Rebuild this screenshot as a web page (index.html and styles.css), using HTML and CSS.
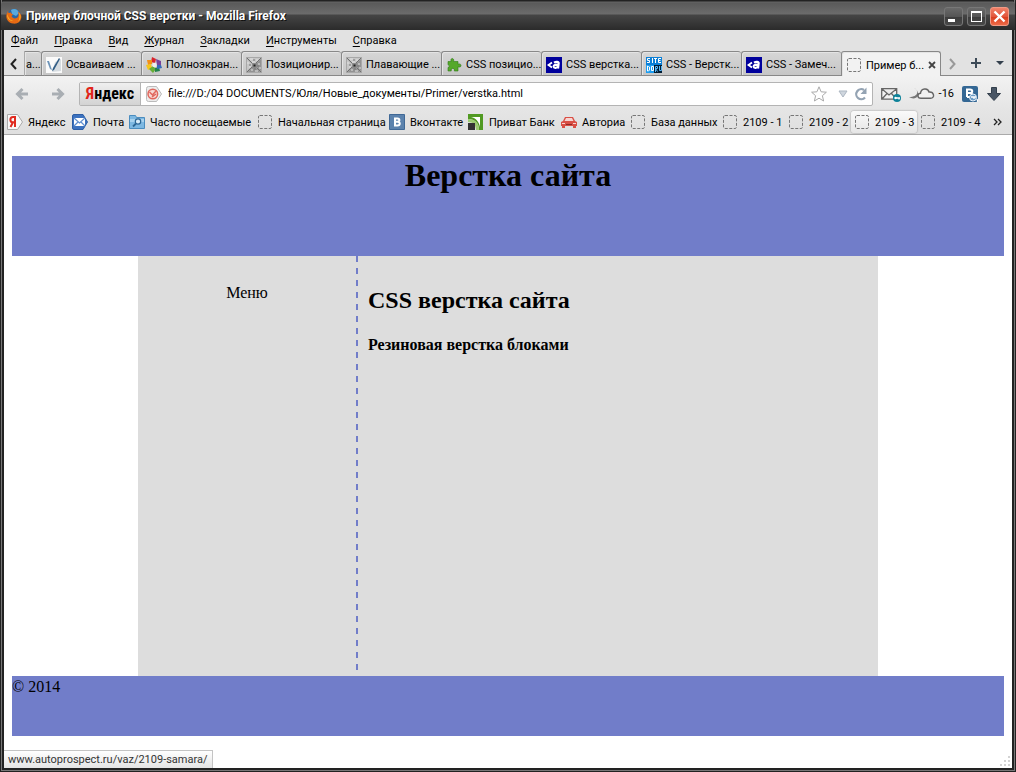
FILE: index.html
```html
<!DOCTYPE html>
<html lang="ru">
<head>
    <meta charset="UTF-8">
    <meta name="viewport" content="width=device-width, initial-scale=1.0">
    <title>Пример блочной CSS верстки</title>
    <link rel="stylesheet" href="styles.css">
</head>
<body>
    <!-- shared icons -->
    <svg class="sprite" aria-hidden="true">
        <symbol id="i-blank" viewBox="0 0 16 16">
            <rect x="1.5" y="1.5" width="13" height="13" rx="1.5" fill="none" stroke="#777" stroke-dasharray="3 1.5"/>
        </symbol>
        <symbol id="i-stone" viewBox="0 0 16 16">
            <path fill="#a8a8a8" d="M0 0h16v16H0z"/>
            <path fill="#c6c6c6" d="M1 1h14L8 8zM1 2v12l6-6z"/>
            <path fill="#929292" d="M15 2v12L9 8zM2 15h12L8 9z"/>
            <path stroke="#6f6f6f" d="M1 1l5 5M15 1l-5 5M1 15l5-5M15 15l-5-5"/>
            <path stroke="#e2e2e2" d="M4 2h3M10 3h2M1 6h2M3 10h2M12 7h2M13 11h2M5 13h2M9 14h3M6 5h3"/>
            <path stroke="#777" d="M7 3h2M3 8h2M11 9h2M8 12h2"/>
            <path fill="#8a8a8a" d="M6 6h5v5H6z"/>
            <path fill="#222" d="M7.500 7.500h2v2h-2z"/>
        </symbol>
        <symbol id="i-a" viewBox="0 0 16 16">
            <path fill="#00009c" d="M0 0h16v16H0z"/>
            <path fill="none" stroke="#fff" stroke-width="1.8" d="M6 5.5L2.500 8L6 10.500"/>
            <path fill="none" stroke="#fff" stroke-width="2.200" d="M8 5.600c2-1.200 5-1 4.700.6L12 11.500M12.300 7.700c-3-.2-4.700.6-4.600 2 .2 1.700 3.300 1.500 4.400-.4"/>
        </symbol>
    </svg>

    <div class="window">
        <header class="titlebar">
            <svg class="icon" viewBox="0 0 16 16" aria-hidden="true">
                <circle cx="8" cy="8" r="7" fill="#2767a8"/>
                <path fill="#59a9dd" d="M5 2c3-2 7-1 8 3l-3 3-4-2z"/>
                <path fill="#e66a13" d="M2 3l.5 2L5 4.500c0 1 1 1.500 2 2L5.500 8c1 3 5 3 6.500 1 1-2 .6-4-.3-5.500C15 5 16 8 15 11c-1.500 4-5 5-8 4.600C2 15-.8 10 .7 6z"/>
                <path fill="#f9b62b" d="M13 4.500c2.400 3 2 7-1 9.200 1.500-2 2-5 1-9.200zM1.400 6c.6 3 2 6 6 7-3 .4-7-2-6-7z"/>
            </svg>
            <span class="titlebar-text">Пример блочной CSS верстки - Mozilla Firefox</span>
            <button class="win-btn" aria-label="Свернуть"><svg viewBox="0 0 19 19"><path fill="#fff" d="M4 12h7v3H4z"/></svg></button>
            <button class="win-btn" aria-label="Развернуть"><svg viewBox="0 0 19 19"><path fill="#fff" fill-rule="evenodd" d="M4 4h11v11H4zM5 6v8h9V6z"/></svg></button>
            <button class="win-btn win-close" aria-label="Закрыть"><svg viewBox="0 0 19 19"><path stroke="#fff" stroke-width="2.400" d="M4.500 4.500l10 10M14.500 4.500l-10 10"/></svg></button>
        </header>

        <nav class="menubar">
            <button><u>Ф</u>айл</button>
            <button><u>П</u>равка</button>
            <button><u>В</u>ид</button>
            <button><u>Ж</u>урнал</button>
            <button><u>З</u>акладки</button>
            <button><u>И</u>нструменты</button>
            <button><u>С</u>правка</button>
        </nav>

        <div class="tabs">
            <button class="tab-scroll" aria-label="Назад по вкладкам"><svg class="icon" viewBox="0 0 16 16"><path fill="none" stroke="#222" stroke-width="2" d="M10 3L5.500 8l4.500 5"/></svg></button>
            <button class="tab tab-cut">а...</button>
            <button class="tab">
                <svg class="icon" viewBox="0 0 16 16"><path fill="#fafafa" d="M0 0h16v16H0z"/><path fill="#d5dbe0" d="M9 5l6-3v12l-9 1z"/><path fill="#6d94b8" d="M1 4l2 0 3 9-2-1z"/><path fill="#315d85" d="M13 1l1 1-6 11-2 1 1-3z"/></svg>
                Осваиваем ...
            </button>
            <button class="tab">
                <svg class="icon" viewBox="0 0 16 16"><path fill="#d8262c" d="M6 0l4 2-1 4-4-1z"/><path fill="#f29019" d="M1 3l5 0 0 4-4 1z"/><path fill="#f5c51b" d="M0 8l5-1 1 4-4 2z"/><path fill="#67ae35" d="M3 12l4-3 3 3-3 4z"/><path fill="#23834b" d="M9 11l4-1 1 4-5 1z"/><path fill="#346bb8" d="M11 7l4 1 1 3-5 1z"/><path fill="#77419a" d="M10 2l5 2 0 4-4 0z"/><circle cx="8.500" cy="8" r="2.200" fill="#eee"/></svg>
                Полноэкран...
            </button>
            <button class="tab"><svg class="icon"><use href="#i-stone"/></svg>Позиционир...</button>
            <button class="tab"><svg class="icon"><use href="#i-stone"/></svg>Плавающие ...</button>
            <button class="tab">
                <svg class="icon" viewBox="0 0 16 16"><path fill="#55a82a" stroke="#2f7b18" stroke-width=".6" d="M2 4.500h3.200C3.500.5 9 .5 7.500 4.500H12v2.700c4-1.700 4 4.300 0 2.600V14H8.300c1-3.500-4-3.500-3 0H2v-3.500c1.800 0 1.800-2.700 0-2.700z"/></svg>
                CSS позицио...
            </button>
            <button class="tab"><svg class="icon"><use href="#i-a"/></svg>CSS верстка...</button>
            <button class="tab">
                <svg class="icon" viewBox="0 0 16 16"><path fill="#0b7fd6" d="M0 0h16v8H0z"/><path fill="#1b9cf0" d="M0 8h8v8H0z"/><path fill="#001c33" d="M8 8h8v8H8z"/><path fill="none" stroke="#fff" d="M4 1.500H1.500v2H3.500v2H1M6.500 1v5M8 1.500h3M9.500 1v5M15 1.500h-2.500v4H15M12 3.500h2.500M1.500 9v5h1l1-1v-3l-1-.5zM5.500 9.500h2v4h-2z"/><path fill="none" stroke="#55b6f6" d="M9.500 15V9.500h2v2h-2l2 3M13.500 9v4.500h2V9"/></svg>
                CSS - Верстк...
            </button>
            <button class="tab"><svg class="icon"><use href="#i-a"/></svg>CSS - Замеч...</button>
            <div class="tab tab-active">
                <svg class="icon"><use href="#i-blank"/></svg>
                <span>Пример б...</span>
                <button class="tab-close" aria-label="Закрыть вкладку"><svg viewBox="0 0 8 8"><path stroke="#444" stroke-width="1.800" d="M1 1l6 6M7 1L1 7"/></svg></button>
            </div>
            <div class="tab-tools">
                <button aria-label="Вперёд по вкладкам"><svg class="icon" viewBox="0 0 16 16"><path fill="none" stroke="#999" stroke-width="2" d="M6 3l4.500 5L6 13"/></svg></button>
                <button aria-label="Новая вкладка"><svg class="icon" viewBox="0 0 16 16"><path stroke="#3c4a57" stroke-width="2" d="M3 7h10M8 2v10"/></svg></button>
                <button aria-label="Список вкладок"><svg class="icon" viewBox="0 0 16 16"><path fill="#333f4c" d="M4 5h8l-4 4z"/></svg></button>
            </div>
        </div>

        <div class="navbar">
            <button class="nav-arrow" aria-label="Назад"><svg class="icon" viewBox="0 0 16 16"><path fill="none" stroke="#a9aeb3" stroke-width="3" d="M14 8H4M8.500 3L3.500 8l5 5"/></svg></button>
            <button class="nav-arrow" aria-label="Вперёд"><svg class="icon" viewBox="0 0 16 16"><path fill="none" stroke="#a9aeb3" stroke-width="3" d="M2 8h10M7.500 3l5 5-5 5"/></svg></button>
            <div class="urlbar">
                <button class="yandex"><span>Я</span>ндекс</button>
                <svg class="icon" viewBox="0 0 16 16" aria-hidden="true"><path fill="#ececec" stroke="#bbb" d="M.5 2.500q0-2 2-2h8l5 7.500-5 7.500h-8q-2 0-2-2z"/><circle cx="6.800" cy="8" r="4.800" fill="#f7d9d4" stroke="#e0665c" stroke-width="1.500"/><path fill="none" stroke="#e0665c" stroke-width="1.500" d="M3.500 6l3 3 3.500-4M6 11l4-3"/></svg>
                <input type="text" aria-label="Адрес" value="file:///D:/04 DOCUMENTS/Юля/Новые_документы/Primer/verstka.html">
                <button aria-label="В закладки"><svg class="icon" viewBox="0 0 16 16"><path fill="#fff" stroke="#aaa" d="M8 .8l2.100 5 5.300.4-4 3.500 1.200 5.300L8 12.200 3.400 15l1.200-5.300-4-3.500 5.300-.4z"/></svg></button>
                <button class="history" aria-label="История"><svg class="icon" viewBox="0 0 16 16"><path fill="#cfd6de" stroke="#adb7c2" d="M4 5h8l-4 6z"/></svg></button>
                <button class="reload" aria-label="Обновить"><svg class="icon" viewBox="0 0 16 16"><path fill="none" stroke="#94a3b3" stroke-width="2.200" d="M12 11.500A5 5 0 1 1 11 4"/><path fill="#94a3b3" d="M13.500 1.500V8H7.500z"/></svg></button>
            </div>
            <div class="addons">
                <button aria-label="Почта"><svg class="icon-wide" viewBox="0 0 20 16"><path fill="#f3f3f3" stroke="#666" stroke-width="1.300" d="M.7 2.700h15v10.500H.7zM1 3l7 6 7.500-6M1 13l5-5.500M15.500 13l-5-5.500"/><circle cx="16" cy="12" r="4" fill="#0d8299"/><path stroke="#fff" stroke-width="1.300" d="M14 12h5M18 12v1.500"/><circle cx="14.500" cy="12" r="1.200" fill="#fff"/></svg></button>
                <button class="weather"><svg class="icon-cloud" viewBox="0 0 26 16" aria-hidden="true"><path fill="#777" d="M5 2c5 2 5 9-5 9 3 2 7 2 9-1 1-3-1-7-4-8z"/><path fill="#f1f1f1" stroke="#666" stroke-width="1.400" d="M12 12.300c-4 0-4-4.600-.5-5C12 2 19 1.500 20 6c5-.5 6.500 6 1.500 6.300z"/></svg>-16</button>
                <button aria-label="Вконтакте"><svg class="icon" viewBox="0 0 16 16"><rect width="16" height="16" rx="2" fill="#346794"/><path fill="none" stroke="#fff" stroke-width="2" d="M5 3v8M4 3.500h4c3 0 3 3.500 0 3.500H5M8 7c3 0 3 4 0 4H5"/><circle cx="11" cy="11.500" r="3.500" fill="#6a9bc5" stroke="#e4eef8"/><path stroke="#fff" stroke-width="1.300" d="M9 11h5M12 11v2M15 13l1 3"/></svg></button>
                <button aria-label="Загрузки"><svg class="icon" viewBox="0 0 16 16"><path fill="#495665" stroke="#333f4c" d="M5.500 1.500h5v6h4L8 14.500 1.500 7.500h4z"/></svg></button>
            </div>
        </div>

        <nav class="bookmarks">
            <a href="#"><svg class="icon" viewBox="0 0 16 16"><path fill="#f8f8f8" stroke="#aaa" d="M.5.500h10l5 7.500-5 7.500H.500z"/><path fill="none" stroke="#e02b20" stroke-width="2" d="M8 13V3H6C2.500 3 2.500 8.300 6 8.300h2M6 8.300L3.500 13"/></svg>Яндекс</a>
            <a href="#"><svg class="icon" viewBox="0 0 16 16"><path fill="#3c72bf" stroke="#2d5ea5" d="M.5 2q0-1.500 1.500-1.500h9l4.500 7.500-4.500 7.500H2Q.5 15.500.5 14z"/><path fill="#fff" d="M2 4h11v8H2z"/><path fill="none" stroke="#5f8fd0" stroke-width="1.200" d="M2 4l5.500 5L13 4M2 12l4-4M13 12L9 8"/></svg>Почта</a>
            <a href="#"><svg class="icon" viewBox="0 0 16 16"><path fill="#7db8e2" stroke="#4b8dbf" d="M.5 1.500h6l1 2h8v11H.5z"/><path fill="#a7d2ef" d="M1 5h14v3H1z"/><circle cx="9" cy="7.500" r="2.700" fill="#d7ecfa" stroke="#2c6796" stroke-width="1.200"/><path stroke="#2c6796" stroke-width="1.800" d="M7 9.500l-3 3"/></svg>Часто посещаемые</a>
            <a href="#"><svg class="icon"><use href="#i-blank"/></svg>Начальная страница</a>
            <a href="#"><svg class="icon" viewBox="0 0 16 16"><path fill="#5b82ad" stroke="#3f6896" d="M.5.5h15v15H.5z"/><path fill="none" stroke="#fff" stroke-width="2" d="M6 4v8M5 4.500h3.500c2.500 0 2.500 3.200 0 3.200H6M8.500 7.700c3 0 3 3.800 0 3.800H5"/></svg>Вконтакте</a>
            <a href="#"><svg class="icon" viewBox="0 0 16 16"><path fill="#519a22" d="M0 0h15v16h-4C11 9 7 5 0 5z"/><path fill="#fff" d="M3 3h9v10C11 8 8 4 3 3z"/><path fill="#9ccc70" d="M0 5c7 0 11 4 11 11H8c0-5-3-8-8-8z"/><path fill="#333" d="M0 9h7v7H0z"/></svg>Приват Банк</a>
            <a href="#"><svg class="icon" viewBox="0 0 16 16"><path fill="#d94f45" d="M4 3h8l2 4 2 1v4h-1v2h-3v-2H4v2H1v-2H0V8l2-1z"/><path fill="#f6d5d2" d="M5 4h6l1.500 3h-9zM1 9h3v1H1zM12 9h3v1h-3z"/><path fill="#8e2b25" d="M5 10h6v1H5z"/></svg>Авториа</a>
            <a href="#"><svg class="icon"><use href="#i-blank"/></svg>База данных</a>
            <a href="#"><svg class="icon"><use href="#i-blank"/></svg>2109 - 1</a>
            <a href="#"><svg class="icon"><use href="#i-blank"/></svg>2109 - 2</a>
            <a href="#" class="hovered"><svg class="icon"><use href="#i-blank"/></svg>2109 - 3</a>
            <a href="#"><svg class="icon"><use href="#i-blank"/></svg>2109 - 4</a>
            <button aria-label="Другие закладки"><svg viewBox="0 0 9 8"><path fill="none" stroke="#222" stroke-width="1.300" d="M1 1l3 3-3 3M5 1l3 3-3 3"/></svg></button>
        </nav>

        <main class="page">
            <div class="header"><h1>Верстка сайта</h1></div>
            <div class="wrap">
                <div class="menu">Меню</div>
                <div class="content">
                    <h2>CSS верстка сайта</h2>
                    <h4>Резиновая верстка блоками</h4>
                </div>
            </div>
            <div class="footer">© 2014</div>
            <div class="status">www.autoprospect.ru/vaz/2109-samara/</div>
            <svg class="grip" viewBox="0 0 10 10" aria-hidden="true"><path fill="#d3d3d3" d="M8 0h2v2H8zM4 4h2v2H4zM8 4h2v2H8zM0 8h2v2H0zM4 8h2v2H4zM8 8h2v2H8z"/></svg>
        </main>
    </div>
</body>
</html>
```
FILE: styles.css
```css
* {
    box-sizing: border-box;
}

body {
    margin: 0;
    font-family: Roboto, "Liberation Sans", sans-serif;
    font-size: 11px;
    color: #000;
}

button {
    padding: 0;
    border: 0;
    background: none;
    font: inherit;
    color: inherit;
}

.sprite {
    position: absolute;
    width: 0;
    height: 0;
}

.icon {
    width: 16px;
    height: 16px;
    flex: none;
    display: block;
}

.window {
    min-height: 100vh;
    display: flex;
    flex-direction: column;
    border: 1px solid #222;
    border-top: 0;
    padding: 0 3px 3px;
    background: #222;
    box-shadow: inset 1px -1px #777, inset -1px 0 #777;
}

/* title bar */
.titlebar {
    height: 30px;
    margin: 0 -3px;
    padding: 2px 6px 0 5px;
    display: flex;
    align-items: center;
    gap: 4px;
    background: linear-gradient(#222 1px, #666 2px, #5a5a5a 3px, #6c6c6c 14px, #454545 15px, #2b2b2b);
    border-radius: 5px 5px 0 0;
    color: #fff;
}

.titlebar-text {
    flex: 1;
    font-size: 12px;
    font-weight: bold;
    text-shadow: 1px 1px #111;
}

.win-btn {
    width: 19px;
    height: 19px;
    border: 1px solid #777;
    border-radius: 3px;
    background: linear-gradient(#6a6a6a, #555 50%, #3c3c3c 51%, #484848);
}

.win-btn svg {
    display: block;
    width: 19px;
    height: 19px;
    margin: -1px;
}

.win-close {
    border-color: #f19a85;
    background: linear-gradient(#f0826a, #e2553a 50%, #d83a1c 51%, #ee6a46);
}

/* menu */
.menubar {
    height: 21px;
    padding-left: 7px;
    display: flex;
    align-items: center;
    gap: 16px;
    background: #e2e2e2;
}

.menubar u {
    text-underline-offset: 2px;
}

/* tabs */
.tabs {
    height: 25px;
    display: flex;
    background: linear-gradient(#e2e2e2 24px, #888 24px);
}

.tab-scroll {
    width: 21px;
    flex: none;
    display: flex;
    align-items: center;
    justify-content: center;
    border-right: 1px solid #aaa;
}

.tab {
    flex: 0 1 100px;
    min-width: 0;
    padding: 2px 3px 0 4px;
    display: flex;
    align-items: center;
    gap: 4px;
    white-space: nowrap;
    overflow: hidden;
    border: 1px solid #888;
    border-right-width: 0;
    border-radius: 3px 3px 0 0;
    background: linear-gradient(#d6d6d6, #c6c6c6);
    box-shadow: inset 1px 1px #e4e4e4;
}

.tab-cut {
    flex: 0 0 16px;
    padding: 2px 0 0 1px;
    border-left: 0;
    border-radius: 0 3px 0 0;
}

.tab-active {
    border-right-width: 1px;
    border-bottom: 0;
    background: #f2f2f2;
}

.tab-active span {
    flex: 1;
}

.tab-close {
    width: 8px;
    margin-right: 3px;
}

.tab-close svg {
    display: block;
    width: 8px;
    height: 8px;
}

.tab-tools {
    flex: 1;
    display: flex;
    align-items: center;
    justify-content: flex-end;
    gap: 8px;
    padding-right: 4px;
}

/* navigation */
.navbar {
    height: 33px;
    padding: 2px 10px 0;
    display: flex;
    align-items: center;
    background: linear-gradient(#f2f2f2, #e5e5e5);
}

.nav-arrow {
    width: 36px;
    flex: none;
}

.urlbar {
    flex: 1;
    height: 24px;
    margin: 0 8px 0 -7px;
    display: flex;
    align-items: center;
    border: 1px solid #b4b4b4;
    border-radius: 2px;
    background: #fff;
}

.urlbar input {
    flex: 1;
    min-width: 0;
    padding: 0 6px;
    border: 0;
    background: none;
    font: inherit;
    color: inherit;
}

.yandex {
    width: 61px;
    align-self: stretch;
    margin-right: 5px;
    border-right: 1px solid #b4b4b4;
    background: linear-gradient(#efefef, #d3d3d3);
    font: bold 16px "Liberation Sans Narrow", "Roboto Condensed", "DejaVu Sans Condensed", sans-serif;
}

.yandex span {
    color: #e1251b;
}

.history {
    margin-left: 8px;
}

.reload {
    margin: 0 3px 0 2px;
}

.addons {
    display: flex;
    align-items: center;
    gap: 8px;
}

.icon-wide {
    display: block;
    width: 20px;
    height: 16px;
}

.icon-cloud {
    width: 26px;
    height: 16px;
}

.weather {
    display: flex;
    align-items: center;
    gap: 4px;
}

/* bookmarks */
.bookmarks {
    height: 26px;
    padding: 1px 0 0;
    display: grid;
    grid-template-columns: 65fr 57fr 128fr 132fr 79fr 93fr 69fr 92fr 66fr 66fr 66fr 66fr 29fr;
    align-items: center;
    background: linear-gradient(#e5e5e5, #dfdfdf);
    border-bottom: 1px solid #aaa;
}

.bookmarks a {
    height: 22px;
    padding-left: 3px;
    display: flex;
    align-items: center;
    gap: 5px;
    color: inherit;
    text-decoration: none;
    white-space: nowrap;
}

.bookmarks .hovered {
    border-radius: 3px;
    background: linear-gradient(#fafafa, #e6e6e6);
    box-shadow: 0 0 2px #888;
}

.bookmarks button svg {
    display: block;
    width: 9px;
    height: 8px;
    margin: auto;
}

/* page */
.page {
    position: relative;
    flex: 1;
    padding: 21px 8px 32px;
    background: #fff;
    font: 16px "Liberation Serif", serif;
}

.header {
    height: 100px;
    background: #717dc9;
    text-align: center;
}

h1,
h2,
h4 {
    margin: 0;
}

h1 {
    padding-top: 1px;
    font-size: 32px;
}

.wrap {
    width: 740px;
    max-width: 100%;
    min-height: 420px;
    margin: 0 auto;
    display: flex;
    background: #ddd;
}

.menu {
    width: 220px;
    padding: 28px 2px 0 0;
    text-align: center;
    background: repeating-linear-gradient(#717dc9 0 6px, transparent 6px 12px) right / 2px 100% no-repeat;
}

.content {
    flex: 1;
    padding: 31px 10px 0;
}

h2 {
    margin-bottom: 22px;
    font-size: 24px;
}

h4 {
    font-size: 16px;
}

.footer {
    height: 60px;
    padding-top: 2px;
    background: #717dc9;
}

.status {
    position: absolute;
    left: 0;
    bottom: 0;
    height: 18px;
    padding: 0 4px;
    border: 1px solid #c4c4c4;
    border-width: 1px 1px 0 0;
    background: linear-gradient(#fff, #e4e4e4);
    font: 11px/18px Roboto, "Liberation Sans", sans-serif;
    color: #333;
}

.grip {
    position: absolute;
    right: 2px;
    bottom: 2px;
    width: 10px;
    height: 10px;
}
```
